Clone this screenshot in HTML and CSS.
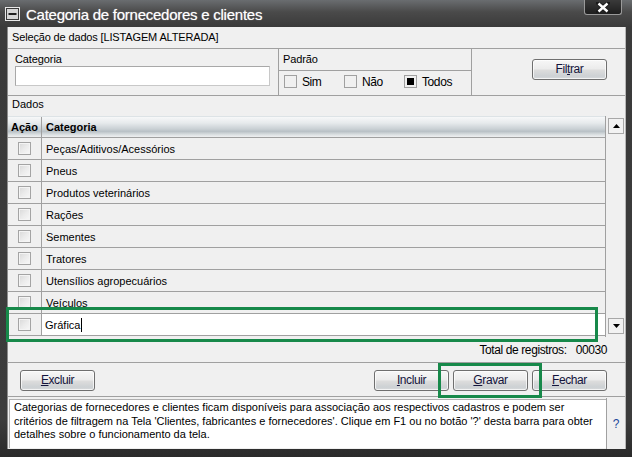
FILE: index.html
```html
<!DOCTYPE html>
<html lang="pt">
<head>
<meta charset="utf-8">
<title>Categoria de fornecedores e clientes</title>
<link rel="stylesheet" href="styles.css">
</head>
<body>
<div class="window">
  <div class="titlebar">
    <svg class="min-icon" width="15" height="14" viewBox="0 0 15 14">
      <rect x="0.5" y="0.5" width="14" height="13" fill="#3a3a3a" stroke="#e8e8e8"/>
      <rect x="2" y="2" width="11" height="10" fill="#d6d6d6"/>
      <rect x="3.5" y="6" width="8" height="2" fill="#202020"/>
    </svg>
    <span class="title">Categoria de fornecedores e clientes</span>
    <div class="close">
      <svg width="14" height="11" viewBox="0 0 14 11">
        <path d="M2 1 L12 10 M12 1 L2 10" stroke="#1a1a1a" stroke-width="4" stroke-linecap="square"/>
        <path d="M2.5 1.5 L11.5 9.5 M11.5 1.5 L2.5 9.5" stroke="#ffffff" stroke-width="2.4"/>
      </svg>
    </div>
  </div>
  <div class="content">
    <div class="sel-head">Seleção de dados [LISTAGEM ALTERADA]</div>
    <div class="filter">
      <div class="f-cat">
        <div class="lbl">Categoria</div>
        <div class="input"></div>
      </div>
      <div class="f-pad">
        <div class="pad-head">Padrão</div>
        <div class="pad-opts">
          <div class="opt"><span class="box"></span><span class="opt-lbl">Sim</span></div>
          <div class="opt"><span class="box"></span><span class="opt-lbl">Não</span></div>
          <div class="opt"><span class="box checked"></span><span class="opt-lbl">Todos</span></div>
        </div>
      </div>
      <div class="f-btn"><div class="btn">Fil<u>t</u>rar</div></div>
    </div>
    <div class="dados">Dados</div>
    <div class="grid-wrap">
      <div class="grid">
        <div class="row head"><div class="c-acao">Ação</div><div class="c-cat">Categoria</div></div>
        <div class="row"><div class="c-acao"><span class="chk"></span></div><div class="c-cat">Peças/Aditivos/Acessórios</div></div>
        <div class="row"><div class="c-acao"><span class="chk"></span></div><div class="c-cat">Pneus</div></div>
        <div class="row"><div class="c-acao"><span class="chk"></span></div><div class="c-cat">Produtos veterinários</div></div>
        <div class="row"><div class="c-acao"><span class="chk"></span></div><div class="c-cat">Rações</div></div>
        <div class="row"><div class="c-acao"><span class="chk"></span></div><div class="c-cat">Sementes</div></div>
        <div class="row"><div class="c-acao"><span class="chk"></span></div><div class="c-cat">Tratores</div></div>
        <div class="row"><div class="c-acao"><span class="chk"></span></div><div class="c-cat">Utensílios agropecuários</div></div>
        <div class="row"><div class="c-acao"><span class="chk"></span></div><div class="c-cat">Veículos</div></div>
        <div class="row editing"><div class="c-acao"><span class="chk"></span></div><div class="c-cat">Gráfica<span class="caret"></span></div></div>
      </div>
      <div class="scroll">
        <div class="sb-btn"><svg width="7" height="4" viewBox="0 0 7 4"><path d="M0 4 L3.5 0 L7 4 Z" fill="#000"/></svg></div>
        <div class="sb-btn"><svg width="7" height="4" viewBox="0 0 7 4"><path d="M0 0 L7 0 L3.5 4 Z" fill="#000"/></svg></div>
      </div>
    </div>
    <div class="total">Total de registros:<span class="num">00030</span></div>
    <div class="actions">
      <div class="btn"><u>E</u>xcluir</div>
      <div class="right-btns">
        <div class="btn"><u>I</u>ncluir</div>
        <div class="btn"><u>G</u>ravar</div>
        <div class="btn"><u>F</u>echar</div>
      </div>
    </div>
    <div class="info">
      <div class="info-text">Categorias de fornecedores e clientes ficam disponíveis para associação aos respectivos cadastros e podem ser<br>critérios de filtragem na Tela 'Clientes, fabricantes e fornecedores'. Clique em F1 ou no botão '?' desta barra para obter<br>detalhes sobre o funcionamento da tela.</div>
      <div class="help">?</div>
    </div>
  </div>
  <div class="hl hl-row"></div>
  <div class="hl hl-btn"></div>
</div>
</body>
</html>
```

FILE: styles.css
```css
html, body {
  margin: 0;
  padding: 0;
  background: #2e2e2e;
}

body {
  font-family: "Liberation Sans", Arial, sans-serif;
  color: #000;
}

.window {
  position: relative;
  width: 632px;
  height: 457px;
  box-sizing: border-box;
  padding: 0 6px 8px 7px;
  display: flex;
  flex-direction: column;
  background: linear-gradient(to bottom, #6a6d70 0px, #4a4a4a 12px, #3a3a3a 27px, #3c3c3c 420px, #2a2a2a 457px);
}

.titlebar {
  height: 27px;
  flex: none;
  display: flex;
  align-items: center;
  margin-left: -2px;
}

.min-icon {
  flex: none;
  margin-top: 1px;
}

.title {
  color: #fff;
  font-size: 15px;
  letter-spacing: -0.25px;
  margin-left: 6px;
  margin-top: 1px;
  text-shadow: 0 0 1px rgba(255, 255, 255, 0.6);
}

.close {
  align-self: flex-start;
  margin-left: auto;
  margin-right: 4px;
  width: 38px;
  height: 15px;
  box-sizing: border-box;
  border: 1px solid #9a9a9a;
  border-top: none;
  border-radius: 0 0 3px 3px;
  background: linear-gradient(to bottom, #3a3a3a, #1e1e1e);
  display: flex;
  align-items: center;
  justify-content: center;
}

.content {
  flex: 1;
  background: #f0f0f0;
  border-left: 1px solid #8c8c8c;
  border-right: 1px solid #b8b8b8;
  display: flex;
  flex-direction: column;
  font-size: 11px;
}

.sel-head {
  height: 21px;
  line-height: 21px;
  border-bottom: 1px solid #a0a0a0;
  padding-left: 4px;
  font-size: 11px;
  letter-spacing: -0.15px;
}

.filter {
  height: 46px;
  display: flex;
  border-bottom: 1px solid #a0a0a0;
}

.f-cat {
  width: 263px;
  padding: 3px 0 0 7px;
  border-right: 1px solid #a0a0a0;
}

.lbl {
  height: 14px;
  line-height: 14px;
  font-size: 11px;
  letter-spacing: -0.1px;
}

.input {
  margin-top: 0;
  width: 255px;
  height: 20px;
  box-sizing: border-box;
  background: #fff;
  border: 1px solid #c8c8c8;
  border-top-color: #a8a8a8;
  border-left-color: #a8a8a8;
}

.f-pad {
  width: 192px;
  border-right: 1px solid #a0a0a0;
  display: flex;
  flex-direction: column;
}

.pad-head {
  height: 21px;
  line-height: 21px;
  padding-left: 4px;
  border-bottom: 1px solid #a0a0a0;
  font-size: 11px;
  letter-spacing: -0.1px;
}

.pad-opts {
  display: flex;
  padding: 4px 0 0 5px;
}

.opt {
  width: 60px;
  display: flex;
  align-items: center;
  height: 13px;
}

.box {
  width: 13px;
  height: 13px;
  box-sizing: border-box;
  border: 1px solid #a0a0a0;
  background: #f0f0f0;
  display: flex;
  align-items: center;
  justify-content: center;
}

.box.checked::after {
  content: "";
  width: 7px;
  height: 7px;
  background: #000;
}

.opt-lbl {
  margin-left: 5px;
  font-size: 12px;
  letter-spacing: -0.4px;
}

.f-btn {
  flex: 1;
  display: flex;
  justify-content: flex-end;
  padding: 10px 18px 0 0;
}

.btn {
  width: 75px;
  height: 21px;
  box-sizing: border-box;
  border: 1px solid #6f6f6f;
  border-radius: 3px;
  background: linear-gradient(to bottom, #f7f7f7 0%, #ececec 45%, #dcdcdc 55%, #cdd1d4 85%, #d8dadc 100%);
  box-shadow: inset 0 0 0 1px rgba(255, 255, 255, 0.7);
  font-size: 12px;
  letter-spacing: -0.4px;
  line-height: 19px;
  text-align: center;
  color: #14143c;
}

.dados {
  height: 20px;
  line-height: 17px;
  padding-left: 4px;
  font-size: 11px;
}

.grid-wrap {
  height: 221px;
  display: flex;
}

.grid {
  width: 597px;
  border-right: 1px solid #a0a0a0;
}

.row {
  display: flex;
  height: 21px;
  border-bottom: 1px solid #a0a0a0;
}

.row.head {
  background: linear-gradient(to bottom, #f7f8f9 0%, #e6eaec 30%, #c9d0d4 60%, #b9c1c6 72%, #dfe3e5 90%, #eef0f1 100%);
  font-weight: bold;
  border-top: 1px solid #dde3e6;
  height: 20px;
}

.c-acao {
  width: 33px;
  border-right: 1px solid #a0a0a0;
  display: flex;
  align-items: center;
  justify-content: center;
  flex: none;
}

.row.head .c-acao {
  justify-content: flex-start;
  padding-left: 3px;
  width: 30px;
}

.c-cat {
  flex: 1;
  display: flex;
  align-items: center;
  padding-left: 4px;
}

.chk {
  width: 13px;
  height: 13px;
  box-sizing: border-box;
  border: 1px solid #a4a4a4;
  background: linear-gradient(135deg, #d8d8d8 0%, #ebebeb 50%, #f8f8f8 100%);
  box-shadow: inset 0 0 0 1px #f4f4f4;
}

.row.editing .c-cat {
  background: #fff;
  padding-left: 3px;
}

.caret {
  display: inline-block;
  width: 1px;
  height: 14px;
  background: #000;
  margin-left: 1px;
}

.scroll {
  flex: 1;
  display: flex;
  flex-direction: column;
  justify-content: space-between;
  padding: 2px 0 3px 2px;
}

.sb-btn {
  width: 16px;
  height: 16px;
  box-sizing: border-box;
  border: 1px solid #a8a8a8;
  background: #f2f2f2;
  display: flex;
  align-items: center;
  justify-content: center;
}

.total {
  height: 25px;
  border-bottom: 1px solid #a0a0a0;
  display: flex;
  justify-content: flex-end;
  align-items: center;
  padding-right: 18px;
  font-size: 12px;
  letter-spacing: -0.4px;
}

.total .num {
  margin-left: 9px;
}

.actions {
  border-bottom: 1px solid #a0a0a0;
  display: flex;
  justify-content: space-between;
  padding: 7px 18px 0 12px;
  box-sizing: border-box;
  height: 34px;
}

.right-btns {
  display: flex;
  gap: 4px;
}

.info {
  flex: 1;
  display: flex;
}

.info-text {
  width: 597px;
  box-sizing: border-box;
  margin: 2px 0 1px 1px;
  background: #fff;
  border-top: 1px solid #b0b0b0;
  border-left: 1px solid #b0b0b0;
  padding: 1px 0 0 4px;
  font-size: 11px;
  line-height: 13.5px;
  white-space: nowrap;
  overflow: hidden;
}

.help {
  flex: 1;
  display: flex;
  align-items: center;
  justify-content: center;
  color: #23479b;
  font-size: 12px;
  border-left: 1px solid #a0a0a0;
  margin-top: 1px;
}

.hl {
  position: absolute;
  box-sizing: border-box;
  border: 3px solid #17894a;
  pointer-events: none;
}

.hl-row {
  left: 6px;
  top: 307px;
  width: 592px;
  height: 35px;
}

.hl-btn {
  left: 438px;
  top: 363px;
  width: 104px;
  height: 35px;
}
```
